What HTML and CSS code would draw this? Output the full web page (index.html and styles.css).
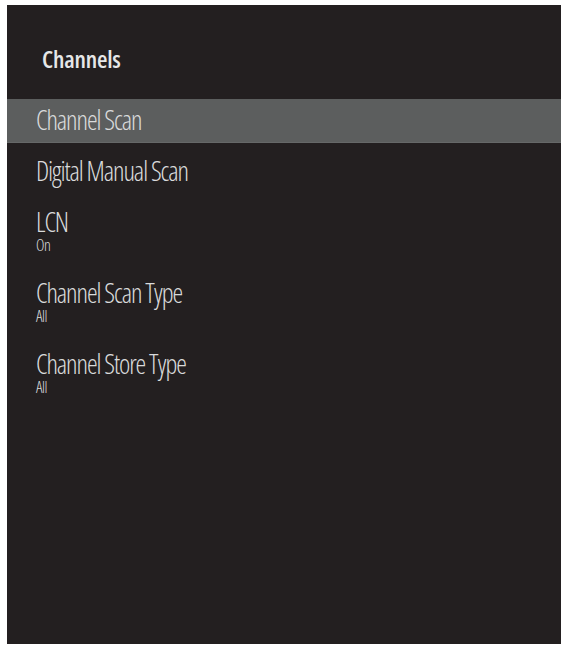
FILE: index.html
```html
<!DOCTYPE html>
<html>
<head>
<meta charset="utf-8">
<link rel="stylesheet" href="styles.css">
</head>
<body>
<div class="panel">
  <h1 class="title">Channels</h1>
  <ul class="menu">
    <li class="item active"><div class="label">Channel Scan</div></li>
    <li class="item"><div class="label">Digital Manual Scan</div></li>
    <li class="item has-value"><div class="label">LCN</div><div class="value">On</div></li>
    <li class="item has-value"><div class="label">Channel Scan Type</div><div class="value">All</div></li>
    <li class="item has-value"><div class="label">Channel Store Type</div><div class="value">All</div></li>
  </ul>
</div>
</body>
</html>
```
FILE: styles.css
```css
html, body {
  margin: 0;
  padding: 0;
  background: #ffffff;
}
body {
  padding: 5px 7px 7px 7px;
  font-family: "Open Sans", "Roboto", sans-serif;
  font-stretch: 75%;
}
.panel {
  width: 554px;
  height: 639px;
  background: #231f20;
  box-sizing: border-box;
  padding-top: 42px;
}
.title {
  margin: 0 0 28px 35px;
  font-size: 24px;
  line-height: 24px;
  font-weight: 600;
  color: #e6e7e8;
  letter-spacing: -0.2px;
}
.menu {
  list-style: none;
  margin: 0;
  padding: 0;
}
.item {
  padding: 7px 29px 9px 29px;
  margin-bottom: 7px;
  color: #d9dadb;
  font-weight: 350;
}
.item.has-value {
  padding-bottom: 12px;
}
.item.active {
  background: #5c5e5e;
  box-shadow: inset 0 -1px 0 #666868;
}
.label {
  font-size: 27px;
  line-height: 28px;
  letter-spacing: -1.1px;
  white-space: nowrap;
}
.value {
  margin-top: 1px;
  font-size: 16px;
  line-height: 16px;
  letter-spacing: -0.5px;
}
```
